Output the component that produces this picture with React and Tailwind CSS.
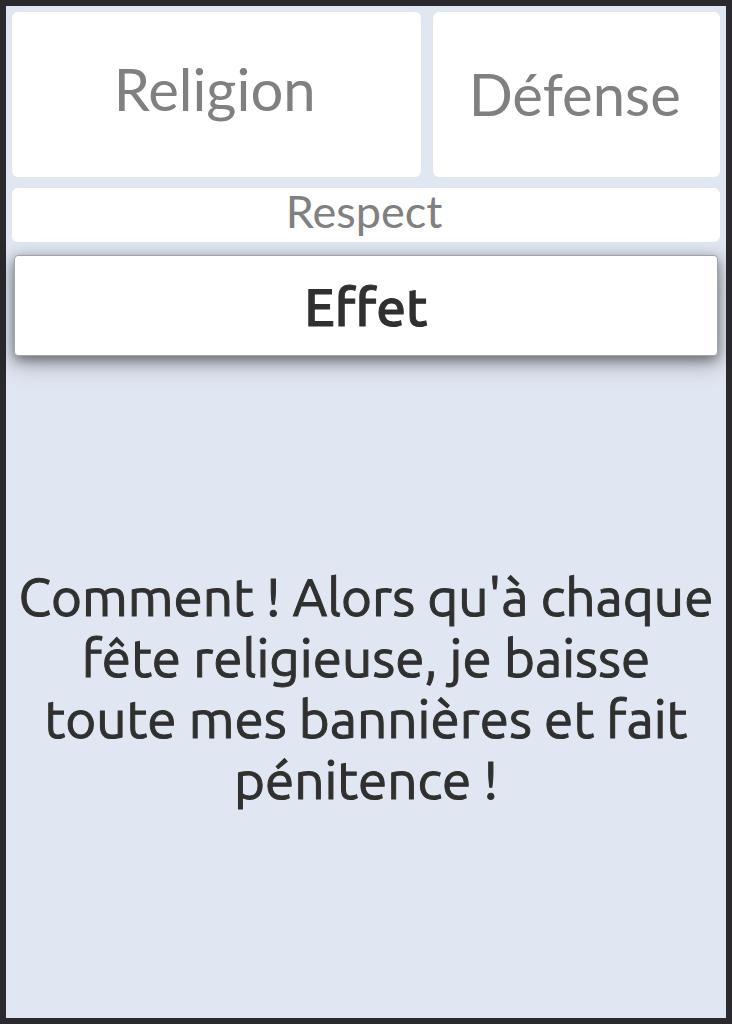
const fieldClass =
  "block w-full min-w-0 rounded-md bg-white text-center font-[Lato,sans-serif] text-[#808080] placeholder:text-[#808080] placeholder:opacity-100 outline-none pr-1";

export default function App() {
  return (
    <main className="flex min-h-screen flex-col border-6 border-[#29292e] bg-[#e0e6f2] p-1.5 text-[#303030]">
      <form className="grid grid-cols-[10fr_7fr] gap-x-3 gap-y-[11px]">
        <input
          type="text"
          aria-label="Religion"
          placeholder="Religion"
          className={`${fieldClass} h-[165px] pb-3 text-[58px]`}
        />
        <input
          type="text"
          aria-label="Défense"
          placeholder="Défense"
          className={`${fieldClass} h-[165px] pb-0.5 text-[58px]`}
        />
        <div className="col-span-2">
          <input
            type="text"
            aria-label="Respect"
            placeholder="Respect"
            className={`${fieldClass} h-[54px] pb-1.5 text-[45px]`}
          />
        </div>
      </form>
      <h1 className="mx-0.5 mt-[13px] flex h-[101px] items-center justify-center rounded-sm border border-[#a0a3a9] bg-white pt-0.5 font-['Ubuntu','Noto_Sans',sans-serif] text-[53px] font-medium [-webkit-text-stroke:1px_#303030] shadow-[0_8px_24px_rgba(34,36,38,0.3),0_4px_12px_rgba(34,36,38,0.5)]">
        Effet
      </h1>
      <div className="flex flex-1 items-center justify-center pt-2">
        <p className="text-center font-['Ubuntu','Noto_Sans',sans-serif] text-[53px] leading-[61px] [-webkit-text-stroke:1px_#303030]">
          Comment ! Alors qu'à chaque
          <br />
          fête religieuse, je baisse
          <br />
          toute mes bannières et fait
          <br />
          pénitence !
        </p>
      </div>
    </main>
  );
}
